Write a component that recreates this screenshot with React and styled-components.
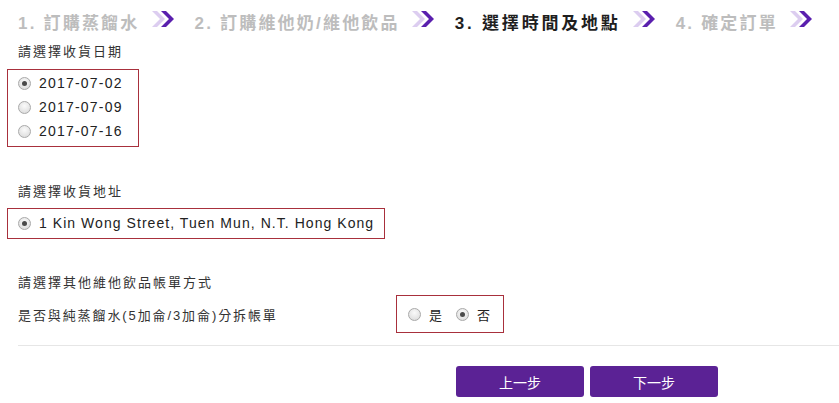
import React from 'react';
import styled, { createGlobalStyle } from 'styled-components';

const GlobalStyle = createGlobalStyle`
	body {
		margin: 0;
		background: #ffffff;
		font-family: "Liberation Sans", "Noto Sans CJK TC", Arial, sans-serif;
		color: #333333;
	}
`;

const Page = styled.div`
	width: 839px;
	height: 403px;
	overflow: hidden;
	padding-left: 7px;
	box-sizing: border-box;
`;

const Steps = styled.div`
	height: 42px;
	display: flex;
	align-items: center;
	padding-left: 11px;
	white-space: nowrap;
`;

const Step = styled.div`
	display: flex;
	align-items: center;
	font-size: 17px;
	font-weight: bold;
	letter-spacing: ${props => (props.$active ? '2.8px' : '2.2px')};
	color: ${props => (props.$active ? '#1e1e1e' : '#bdbdbd')};
	margin-right: 19px;
	> svg {
		margin-left: 12px;
		margin-top: -5px;
	}
`;

const Label = styled.div`
	margin-left: 11px;
	font-size: 13px;
	line-height: 20px;
	letter-spacing: 2px;
	color: #333333;
	margin-top: ${props => props.$top || 0}px;
`;

const Box = styled.div`
	display: inline-flex;
	flex-direction: ${props => (props.$row ? 'row' : 'column')};
	align-items: ${props => (props.$row ? 'center' : 'flex-start')};
	gap: ${props => (props.$row ? '14px' : '0')};
	border: 1px solid #a8303c;
	padding: ${props => props.$pad};
	margin-top: ${props => props.$top || 0}px;
`;

const Choice = styled.label`
	display: flex;
	align-items: center;
	height: 24px;
	gap: 8px;
	font-size: ${props => props.$size || 14}px;
	letter-spacing: ${props => props.$spacing ?? 1.2}px;
	color: #222222;
`;

const Radio = styled.span`
	width: 11px;
	height: 11px;
	border-radius: 50%;
	border: 1px solid #a9a9a9;
	background: radial-gradient(circle at 50% 35%, #fafafa 0%, #e2e2e2 70%, #d2d2d2 100%);
	display: flex;
	align-items: center;
	justify-content: center;
	flex: none;
	&::after {
		content: '';
		width: 5px;
		height: 5px;
		border-radius: 50%;
		background: ${props => (props.$checked ? '#4a4a4a' : 'transparent')};
	}
`;

const SplitRow = styled.div`
	display: grid;
	grid-template-columns: 389px auto;
	align-items: center;
	margin-top: 2px;
	> span {
		margin-left: 11px;
		font-size: 13px;
		letter-spacing: 1.9px;
		color: #333333;
	}
`;

const Divider = styled.hr`
	margin: 12px 0 0 11px;
	border: none;
	border-top: 1px solid #e6e6e6;
`;

const Actions = styled.div`
	display: flex;
	gap: 6px;
	padding-left: 449px;
	margin-top: 20px;
`;

const Button = styled.button`
	width: 128px;
	height: 31px;
	border: none;
	border-radius: 3px;
	background: #5b2295;
	color: #ffffff;
	font-family: "Noto Sans CJK TC", sans-serif;
	font-size: 14px;
	cursor: pointer;
`;

const Chevrons = () => (
	<svg width="24" height="16" viewBox="0 0 24 16">
		<polygon points="0,0 5,0 13,8 5,16 0,16 8,8" fill="#dccdf0" />
		<polygon points="9,0 14,0 22,8 14,16 9,16 17,8" fill="#5a1fae" />
	</svg>
);

const steps = ['1. 訂購蒸餾水', '2. 訂購維他奶/維他飲品', '3. 選擇時間及地點', '4. 確定訂單'];
const dates = ['2017-07-02', '2017-07-09', '2017-07-16'];

const App = () => (
	<Page>
		<GlobalStyle />
		<Steps>
			{steps.map((s, i) => (
				<Step key={s} $active={i === 2}>
					{s}
					<Chevrons />
				</Step>
			))}
		</Steps>

		<Label>請選擇收貨日期</Label>
		<div>
			<Box $top={7} $pad="1px 15px 3px 10px">
				{dates.map((d, i) => (
					<Choice key={d}>
						<Radio $checked={i === 0} />
						{d}
					</Choice>
				))}
			</Box>
		</div>

		<Label $top={35}>請選擇收貨地址</Label>
		<div>
			<Box $top={6} $pad="2px 10px 3px 10px">
				<Choice $spacing={1.05}>
					<Radio $checked />
					1 Kin Wong Street, Tuen Mun, N.T. Hong Kong
				</Choice>
			</Box>
		</div>

		<Label $top={34}>請選擇其他維他飲品帳單方式</Label>
		<SplitRow>
			<span>是否與純蒸餾水(5加侖/3加侖)分拆帳單</span>
			<div>
				<Box $row $pad="6px 13px 6px 11px">
					<Choice $size={13} $spacing={0}>
						<Radio />是
					</Choice>
					<Choice $size={13} $spacing={0}>
						<Radio $checked />否
					</Choice>
				</Box>
			</div>
		</SplitRow>

		<Divider />

		<Actions>
			<Button>上一步</Button>
			<Button>下一步</Button>
		</Actions>
	</Page>
);

export default App;
